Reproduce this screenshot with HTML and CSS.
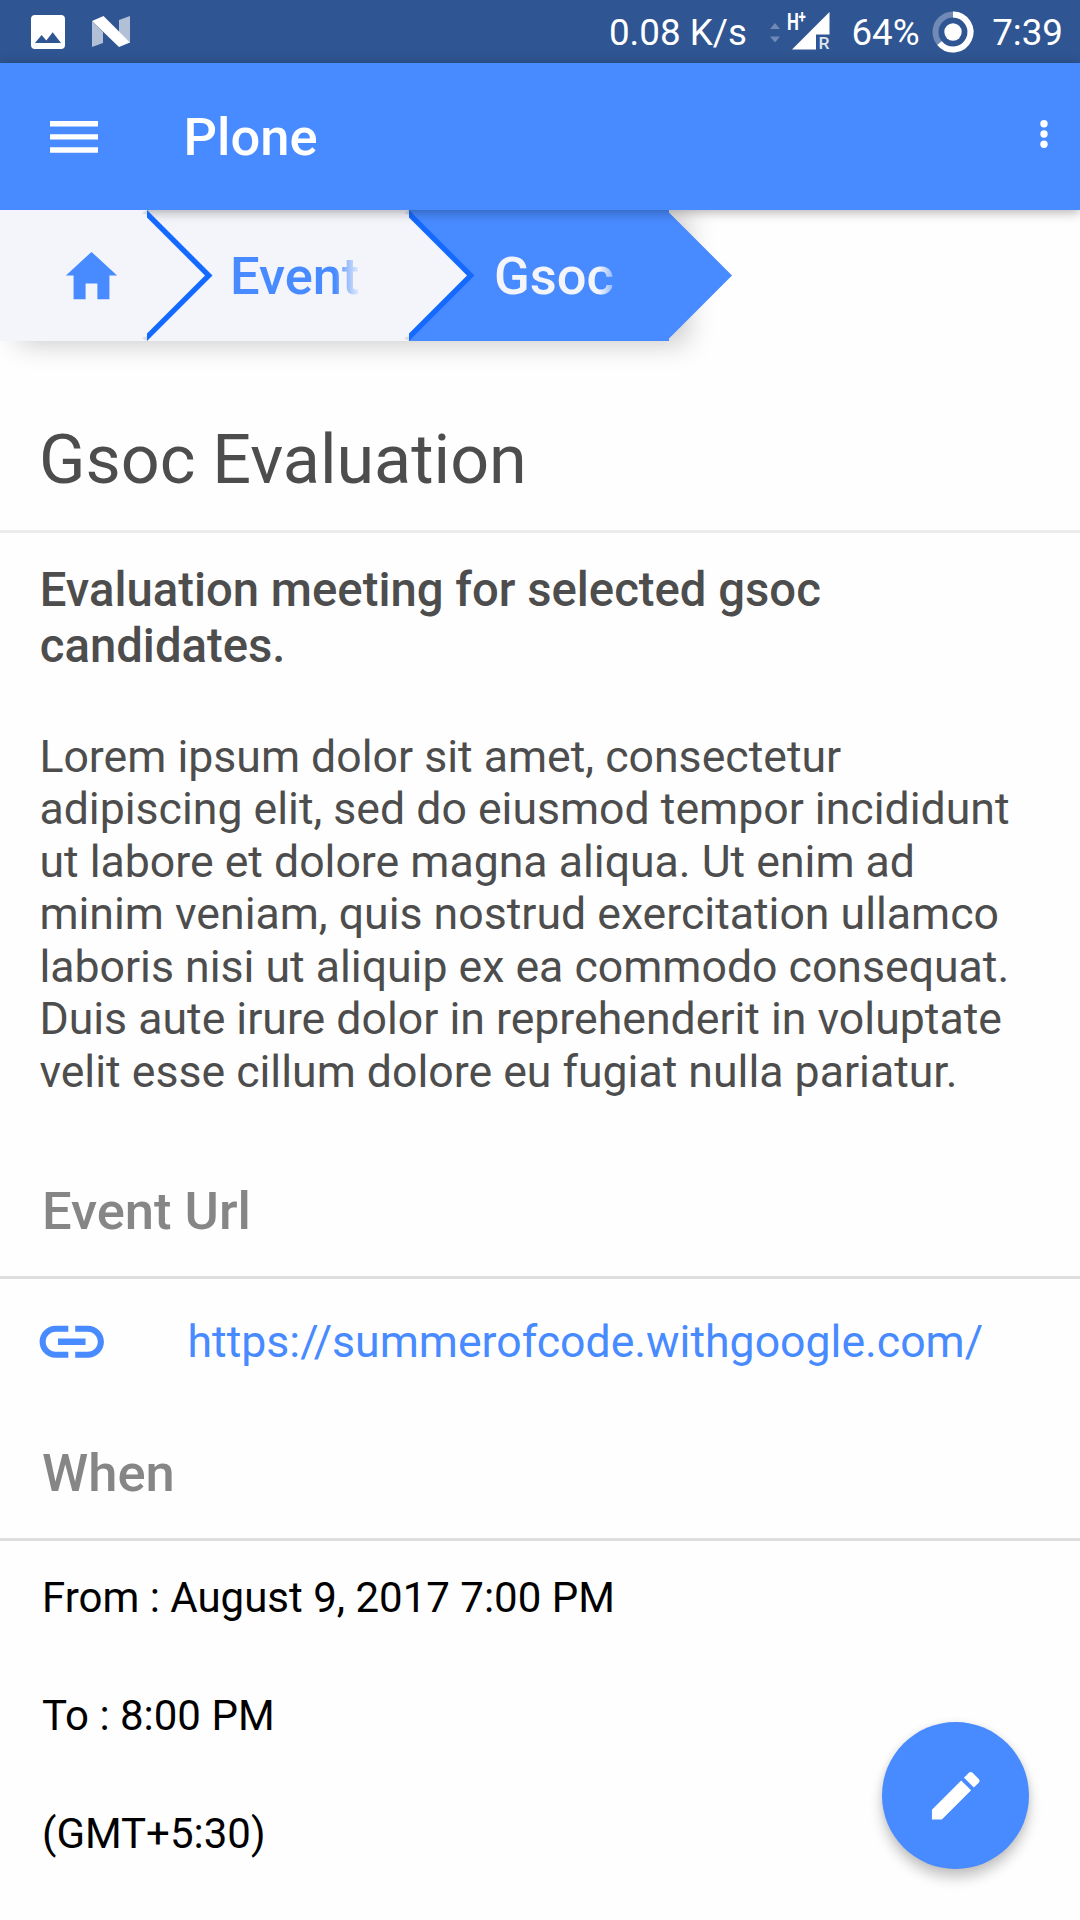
FILE: index.html
```html
<!DOCTYPE html>
<html lang="en">
<head>
<meta charset="utf-8">
<title>Plone</title>
<link rel="stylesheet" href="styles.css">
</head>
<body>
<div class="screen">
  <div class="status-bar">
    <svg class="status-photo" viewBox="0 0 34 34"><path fill="#fff" fill-rule="evenodd" d="M4 0h26a4 4 0 0 1 4 4v26a4 4 0 0 1-4 4H4a4 4 0 0 1-4-4V4a4 4 0 0 1 4-4zM4 28h26l-8.300-10.700-6.400 8.200-4.700-5.500z"/></svg>
    <svg class="status-nougat" viewBox="0 0 38 31"><path fill="#b1bfd7" d="M0 5l11 11v11L0 31zM27 4l11-4v27L27 16z"/><path fill="#fff" d="M0 5l11.500-5L38 26.500 27 31z"/></svg>
    <span class="status-text status-speed">0.08 K/s</span>
    <svg class="status-signal" viewBox="0 0 60 40"><path fill="#7189b5" d="M0 17l5-6 5 6zM0 24.500h10l-5 6z"/><path fill="#fff" d="M59.500 0v22.500H46V37.500H22z"/><text class="signal-type" transform="translate(17 18.300) scale(.7 1)">H<tspan class="signal-plus" dy="-7.500" dx="-.5">+</tspan></text><text class="signal-roam" x="48.500" y="37.300" textLength="11" lengthAdjust="spacingAndGlyphs">R</text></svg>
    <span class="status-text">64%</span>
    <svg class="status-battery" viewBox="0 0 42 42"><circle cx="21" cy="21" r="17.500" fill="none" stroke="#7189b5" stroke-width="6"/><path d="M21 3.500A17.500 17.500 0 1 1 7.500 32.200" fill="none" stroke="#fff" stroke-width="6"/><circle cx="21" cy="21" r="8.700" fill="#fff"/></svg>
    <span class="status-text">7:39</span>
  </div>

  <header class="app-bar">
    <svg class="menu-icon" viewBox="0 0 48 32"><path fill="#fff" d="M0 0h48v5.500H0zM0 13.200h48v5.300H0zM0 26.300h48v5.500H0z"/></svg>
    <h1 class="app-title">Plone</h1>
    <svg class="more-icon" viewBox="0 0 8 28"><circle cx="4" cy="3.700" r="3.700" fill="#fff"/><circle cx="4" cy="14" r="3.700" fill="#fff"/><circle cx="4" cy="24.300" r="3.700" fill="#fff"/></svg>
  </header>

  <nav class="crumbs">
    <div class="crumb crumb-home">
      <svg class="home-icon" viewBox="0 0 512 512"><path fill="#488aff" d="M208 448V320h96v128h97.600V256H464L256 64 48 256h62.400v192z"/></svg>
      <svg class="arrow" viewBox="0 0 72 131"><path fill="#dcdde1" d="M0 3l5-3v5zM0 128l5 3v-5z"/><path fill="#1469ff" d="M5 0l65.500 65.500L5 131z"/><path fill="#f3f5fb" d="M5 7.500l58 58-58 58z"/></svg>
    </div>
    <div class="crumb crumb-event">
      <span class="crumb-label">Event</span>
      <svg class="arrow" viewBox="0 0 72 131"><path fill="#dcdde1" d="M0 3l5-3v5zM0 128l5 3v-5z"/><path fill="#1469ff" d="M5 0l65.500 65.500L5 131z"/><path fill="#f3f5fb" d="M5 7.500l58 58-58 58z"/></svg>
    </div>
    <div class="crumb crumb-current">
      <span class="crumb-label">Gsoc</span>
      <svg class="arrow" viewBox="0 0 72 131"><path fill="#488aff" d="M5 2.500l63 63-63 63z"/></svg>
    </div>
  </nav>

  <main>
    <h2 class="page-title">Gsoc Evaluation</h2>
    <section class="body-text">
      <p class="summary">Evaluation meeting for selected gsoc<br>candidates.</p>
      <p class="description">Lorem ipsum dolor sit amet, consectetur<br>adipiscing elit, sed do eiusmod tempor incididunt<br>ut labore et dolore magna aliqua. Ut enim ad<br>minim veniam, quis nostrud exercitation ullamco<br>laboris nisi ut aliquip ex ea commodo consequat.<br>Duis aute irure dolor in reprehenderit in voluptate<br>velit esse cillum dolore eu fugiat nulla pariatur.</p>
    </section>
    <h3 class="section-title">Event Url</h3>
    <div class="link-row">
      <svg class="link-icon" viewBox="0 0 512 512"><path fill="#488aff" d="M74.600 256c0-38.300 31.100-69.400 69.400-69.400h88V144h-88c-61.800 0-112 50.200-112 112s50.200 112 112 112h88v-42.600h-88c-38.300 0-69.400-31.100-69.400-69.400zm85.400 22h192v-44H160v44zm208-134h-88v42.600h88c38.300 0 69.400 31.100 69.400 69.400s-31.100 69.400-69.400 69.400h-88V368h88c61.800 0 112-50.200 112-112s-50.200-112-112-112z"/></svg>
      <a class="event-link">https://summerofcode.withgoogle.com/</a>
    </div>
    <h3 class="section-title">When</h3>
    <div class="when-list">
      <p class="when-item">From : August 9, 2017 7:00 PM</p>
      <p class="when-item">To : 8:00 PM</p>
      <p class="when-item">(GMT+5:30)</p>
    </div>
  </main>

  <div class="fab">
    <svg class="edit-icon" viewBox="0 0 512 512"><path fill="#fff" d="M64 368v80h80l235.727-235.729-79.999-79.998L64 368zm377.602-217.602c8.531-8.531 8.531-21.334 0-29.865l-50.135-50.135c-8.531-8.531-21.334-8.531-29.865 0l-39.468 39.469 79.999 79.998 39.469-39.467z"/></svg>
  </div>
</div>
</body>
</html>
```
FILE: styles.css
```css
* { box-sizing: border-box; margin: 0; padding: 0; }

body {
  font-family: Roboto, "Liberation Sans", sans-serif;
  background: #fefefe;
  color: #4d4d4d;
}

svg { display: block; flex: none; overflow: visible; }

.screen {
  position: relative;
  width: 1080px;
  height: 1920px;
  overflow: hidden;
}

.status-bar {
  display: flex;
  align-items: center;
  height: 63px;
  padding-left: 30.500px;
  padding-right: 17px;
  background: #2f5592;
  color: #fff;
  font-size: 36.750px;
  white-space: nowrap;
}
.status-photo { width: 34px; height: 34px; }
.status-nougat { width: 38px; height: 31px; margin-left: 27px; }
.status-text { padding-top: 3px; line-height: 60px; }
.status-speed { margin-left: auto; }
.status-signal { width: 60px; height: 40px; margin: 0 21.500px 0 23px; }
.status-battery { width: 42px; height: 42px; margin: 0 18.500px 0 12px; }
.signal-type { font-size: 24px; font-weight: 700; fill: #fff; }
.signal-plus { font-size: 19px; font-weight: 700; fill: #fff; }
.signal-roam { font-size: 17px; font-weight: 500; fill: #dfe5ef; }

.app-bar {
  position: relative;
  z-index: 2;
  display: flex;
  align-items: center;
  height: 147px;
  padding-left: 49.500px;
  padding-right: 32.500px;
  background: #488aff;
  color: #fff;
  box-shadow: 0 2px 11px rgba(0, 0, 0, .32);
}
.menu-icon { width: 48px; height: 32px; }
.app-title {
  flex: 1;
  margin-left: 86px;
  font-size: 52.500px;
  font-weight: 500;
  line-height: 64px;
}
.more-icon { width: 8px; height: 28px; margin-bottom: 6px; }

.crumbs {
  position: relative;
  display: flex;
  width: 669px;
  height: 131px;
  box-shadow: 18px 2px 26px rgba(0, 0, 0, .22);
}
.crumb {
  position: relative;
  display: flex;
  align-items: center;
  height: 131px;
  font-size: 52.500px;
  font-weight: 500;
}
.crumb-home { z-index: 2; width: 147px; padding-left: 60px; background: #f3f5fb; }
.crumb-event { z-index: 1; width: 262px; padding-left: 83px; background: #f3f5fb; color: #488aff; }
.crumb-current { width: 260px; padding-left: 85px; background: #488aff; color: #f3f5fb; }
.home-icon { width: 63px; height: 63px; margin-bottom: 1px; }
.crumb-label {
  width: 131px;
  line-height: 64px;
  -webkit-mask-image: linear-gradient(to right, #000 calc(100% - 26px), transparent);
  mask-image: linear-gradient(to right, #000 calc(100% - 26px), transparent);
}
.arrow { position: absolute; top: 0; right: -67px; width: 72px; height: 131px; }

.page-title {
  height: 192px;
  padding: 77px 39px 0;
  border-bottom: 3px solid #ebebeb;
  font-size: 68.250px;
  font-weight: 400;
  line-height: 84px;
}
.body-text { height: 589px; padding: 29px 39.400px 0; }
.summary { padding-left: .4px; font-size: 47.250px; font-weight: 500; line-height: 56px; }
.description {
  margin-top: 56.500px;
  font-size: 44.625px;
  line-height: 52.500px;
  white-space: nowrap;
}

.section-title {
  height: 157px;
  padding: 57px 42px 0;
  border-bottom: 3px solid #dedede;
  color: #868686;
  font-size: 52.500px;
  font-weight: 500;
  line-height: 64px;
}
.link-row {
  display: flex;
  align-items: center;
  gap: 79px;
  height: 105px;
  padding: 20.500px 35px 0;
  color: #488aff;
  font-size: 44.625px;
}
.link-icon { width: 73.500px; height: 73.500px; }
.event-link { line-height: 52px; }
.when-list { margin-top: -2px; color: #000; }
.when-item {
  padding-left: 42px;
  font-size: 42px;
  line-height: 118px;
}

.fab {
  position: absolute;
  left: 882px;
  top: 1722px;
  display: flex;
  align-items: center;
  justify-content: center;
  width: 147px;
  height: 147px;
  border-radius: 50%;
  background: #488aff;
  box-shadow: 0 9px 13px rgba(0, 0, 0, .22), 0 0 7px rgba(0, 0, 0, .08);
}
.edit-icon { width: 63.500px; height: 63.500px; }
```
